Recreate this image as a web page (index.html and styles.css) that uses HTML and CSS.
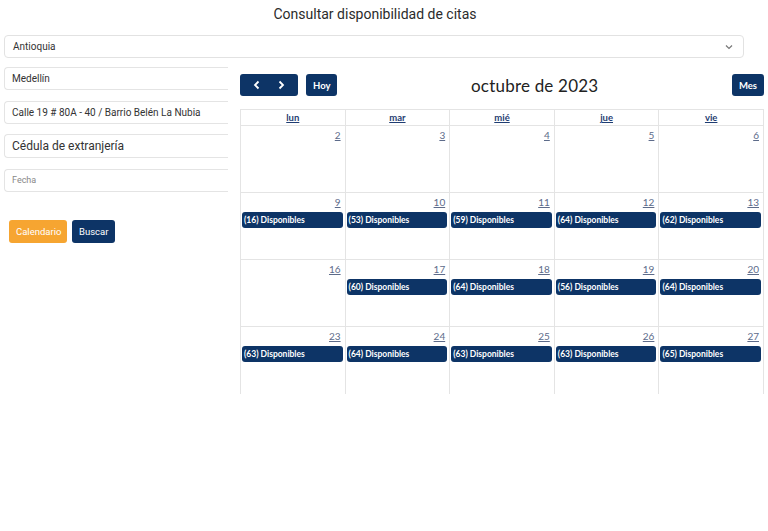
FILE: index.html
```html
<!DOCTYPE html>
<html lang="es">
<head>
<meta charset="utf-8">
<title>Consultar disponibilidad de citas</title>
<link rel="stylesheet" href="styles.css">
</head>
<body>
<div class="page">
  <h1 class="title">Consultar disponibilidad de citas</h1>
  <div class="select">
    <span>Antioquia</span>
    <svg class="chev" width="8" height="6" viewBox="0 0 8 6"><path d="M1 1.5 L4 4.5 L7 1.5" fill="none" stroke="#777" stroke-width="1.2"/></svg>
  </div>
  <div class="main">
    <div class="form">
      <div class="field">Medellín</div>
      <div class="field">Calle 19 # 80A - 40 / Barrio Belén La Nubia</div>
      <div class="field big">Cédula de extranjería</div>
      <div class="field ph">Fecha</div>
      <div class="actions">
        <button class="btn orange">Calendario</button>
        <button class="btn navy">Buscar</button>
      </div>
    </div>
    <div class="cal">
      <div class="toolbar">
        <div class="tgroup">
          <div class="navpair">
            <span class="arrow"><svg width="8" height="10" viewBox="0 0 8 10"><path d="M5.5 1.5 L2 5 L5.5 8.5" fill="none" stroke="#fff" stroke-width="1.8"/></svg></span>
            <span class="arrow"><svg width="8" height="10" viewBox="0 0 8 10"><path d="M2.5 1.5 L6 5 L2.5 8.5" fill="none" stroke="#fff" stroke-width="1.8"/></svg></span>
          </div>
          <div class="tbtn">Hoy</div>
        </div>
        <div class="month">octubre de 2023</div>
        <div class="tbtn">Mes</div>
      </div>
      <div class="grid">
        <div class="hd">lun</div><div class="hd">mar</div><div class="hd">mié</div><div class="hd">jue</div><div class="hd">vie</div>

        <div class="day"><span class="num">2</span></div>
        <div class="day"><span class="num">3</span></div>
        <div class="day"><span class="num">4</span></div>
        <div class="day"><span class="num">5</span></div>
        <div class="day"><span class="num">6</span></div>

        <div class="day"><span class="num">9</span><div class="ev">(16) Disponibles</div></div>
        <div class="day"><span class="num">10</span><div class="ev">(53) Disponibles</div></div>
        <div class="day"><span class="num">11</span><div class="ev">(59) Disponibles</div></div>
        <div class="day"><span class="num">12</span><div class="ev">(64) Disponibles</div></div>
        <div class="day"><span class="num">13</span><div class="ev">(62) Disponibles</div></div>

        <div class="day"><span class="num">16</span></div>
        <div class="day"><span class="num">17</span><div class="ev">(60) Disponibles</div></div>
        <div class="day"><span class="num">18</span><div class="ev">(64) Disponibles</div></div>
        <div class="day"><span class="num">19</span><div class="ev">(56) Disponibles</div></div>
        <div class="day"><span class="num">20</span><div class="ev">(64) Disponibles</div></div>

        <div class="day last"><span class="num">23</span><div class="ev">(63) Disponibles</div></div>
        <div class="day last"><span class="num">24</span><div class="ev">(64) Disponibles</div></div>
        <div class="day last"><span class="num">25</span><div class="ev">(63) Disponibles</div></div>
        <div class="day last"><span class="num">26</span><div class="ev">(63) Disponibles</div></div>
        <div class="day last"><span class="num">27</span><div class="ev">(65) Disponibles</div></div>
      </div>
    </div>
  </div>
</div>
</body>
</html>
```
FILE: styles.css
```css
* { box-sizing: border-box; }
html, body { margin: 0; padding: 0; background: #fff; }
body { font-family: Roboto, "Liberation Sans", sans-serif; color: #333; }
.page { width: 768px; height: 531px; overflow: hidden; }
.title {
  margin: 0;
  height: 31px;
  padding: 6px 18px 0 0;
  text-align: center;
  font-size: 14px;
  font-weight: 400;
  color: #2b2b2b;
}
.select {
  margin: 4px 0 0 4px;
  width: 740px;
  height: 23px;
  border: 1px solid #e2e2e2;
  border-radius: 4px;
  display: flex;
  align-items: center;
  justify-content: space-between;
  padding: 0 10px 0 8px;
  font-size: 10px;
  color: #333;
}
.main { display: flex; margin-top: 9px; }
.form { width: 240px; flex: none; padding-left: 4px; display: flex; flex-direction: column; }
.field {
  width: 224px;
  height: 23px;
  border: 1px solid #e4e4e4;
  border-right: none;
  border-radius: 4px 0 0 4px;
  display: flex;
  align-items: center;
  padding-left: 7px;
  font-size: 10px;
  color: #333;
  margin-bottom: 10.5px;
  white-space: nowrap;
  overflow: hidden;
}
.field.big { font-size: 12px; height: 24px; }
.field.ph { color: #888; font-size: 9px; }
.actions { display: flex; gap: 5px; margin-top: 18px; padding-left: 5px; }
.btn {
  height: 23px;
  border: none;
  border-radius: 3px;
  font-family: Roboto, "Liberation Sans", sans-serif;
  font-size: 9.5px;
  color: #fff;
  padding: 0 7px;
}
.btn.orange { background: #f6a531; width: 58px; }
.btn.navy { background: #0d3466; width: 43px; }
.cal { width: 524px; flex: none; padding-top: 7px; font-family: Lato, "Liberation Sans", sans-serif; }
.toolbar { display: flex; justify-content: space-between; align-items: center; height: 22px; }
.tgroup { display: flex; gap: 8px; }
.navpair {
  width: 58px; height: 22px; background: #0d3466; border-radius: 3px;
  display: flex; justify-content: space-around; align-items: center; padding: 0 5px;
}
.arrow { display: flex; }
.tbtn {
  height: 22px; background: #0d3466; color: #fff; border-radius: 3px;
  font-size: 9.5px; font-weight: 700; padding: 0 7px;
  display: flex; align-items: center;
}
.month { font-size: 17px; color: #222; font-weight: 400; letter-spacing: 0.2px; }
.grid {
  margin-top: 13px;
  display: grid;
  grid-template-columns: repeat(5, 1fr);
  border-top: 1px solid #e4e4e4;
  border-left: 1px solid #e4e4e4;
}
.hd {
  height: 16px;
  border-right: 1px solid #e4e4e4;
  border-bottom: 1px solid #e4e4e4;
  text-align: center;
  font-size: 9.5px;
  font-weight: 700;
  color: #1f3d72;
  text-decoration: underline;
  line-height: 15px;
}
.day {
  height: 67px;
  border-right: 1px solid #e4e4e4;
  border-bottom: 1px solid #e4e4e4;
  display: flex;
  flex-direction: column;
  padding: 3px 2px 0 1px;
}
.day.last { border-bottom: none; }
.num {
  align-self: flex-end;
  font-size: 10px;
  color: #5d6b8a;
  text-decoration: underline;
  line-height: 13px;
  padding-right: 2px;
}
.ev {
  margin-top: 3px;
  height: 16px;
  background: #0d3466;
  color: #fff;
  border-radius: 3px;
  font-size: 8.5px;
  font-weight: 700;
  line-height: 16px;
  padding-left: 2px;
  white-space: nowrap;
}
```
